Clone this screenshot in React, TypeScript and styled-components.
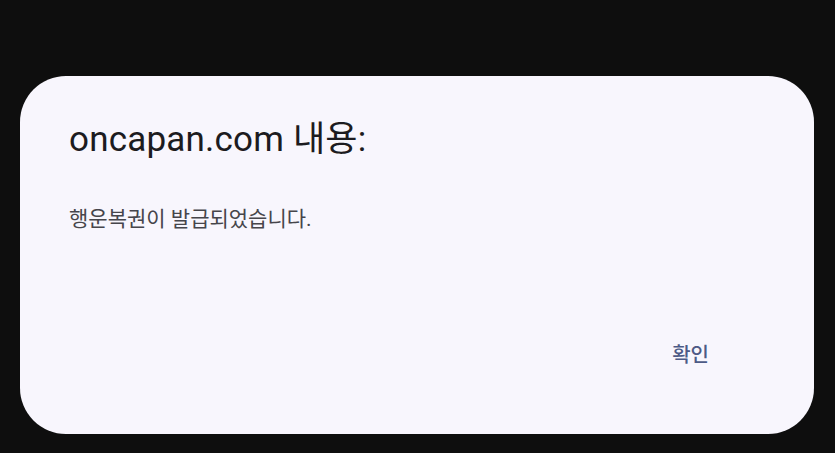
import React from "react";
import styled, { createGlobalStyle } from "styled-components";

const Global = createGlobalStyle`
  html, body { margin: 0; padding: 0; background: #0e0e0e; }
  body { width: 835px; height: 453px; overflow: hidden; }
`;

const Screen = styled.div`
  width: 835px;
  height: 453px;
  box-sizing: border-box;
  padding: 76px 21px 19px 20px;
  background: #0e0e0e;
  font-family: Roboto, "Noto Sans CJK KR", sans-serif;
`;

const Dialog = styled.div`
  height: 100%;
  box-sizing: border-box;
  background: #f8f6fd;
  border-radius: 46px;
  padding: 42px 49px 0 49px;
  display: flex;
  flex-direction: column;
`;

const Title = styled.h1`
  margin: 0;
  font-size: 35px;
  font-weight: 400;
  line-height: 44px;
  color: #1c1b20;
  letter-spacing: 0.2px;
`;

const Message = styled.p`
  margin: 43px 0 0 0;
  font-size: 21px;
  font-weight: 400;
  line-height: 28px;
  color: #46454b;
`;

const Actions = styled.div`
  margin-top: auto;
  margin-bottom: 65px;
  padding-right: 52px;
  display: flex;
  justify-content: flex-end;
`;

const Button = styled.button`
  border: none;
  background: transparent;
  padding: 0 4px;
  font-family: inherit;
  font-size: 20px;
  font-weight: 500;
  line-height: 28px;
  color: #4d5a86;
`;

export default function App() {
  return (
    <>
      <Global />
      <Screen>
        <Dialog>
          <Title>oncapan.com 내용:</Title>
          <Message>행운복권이 발급되었습니다.</Message>
          <Actions>
            <Button>확인</Button>
          </Actions>
        </Dialog>
      </Screen>
    </>
  );
}
